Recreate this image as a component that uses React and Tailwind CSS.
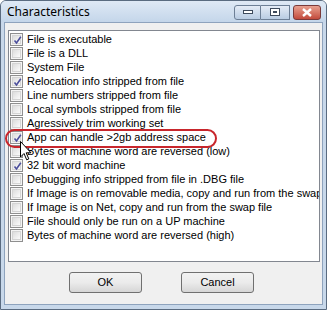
import React from "react";

const items = [
  ["File is executable", true],
  ["File is a DLL", false],
  ["System File", false],
  ["Relocation info stripped from file", true],
  ["Line numbers stripped from file", false],
  ["Local symbols stripped from file", false],
  ["Agressively trim working set", false],
  ["App can handle >2gb address space", true],
  ["Bytes of machine word are reversed (low)", false],
  ["32 bit word machine", true],
  ["Debugging info stripped from file in .DBG file", false],
  ["If Image is on removable media, copy and run from the swap file", false],
  ["If Image is on Net, copy and run from the swap file", false],
  ["File should only be run on a UP machine", false],
  ["Bytes of machine word are reversed (high)", false],
];

function Check({ checked }) {
  return (
    <div className="w-[13px] h-[13px] shrink-0 border border-[#8f8f8f] bg-[#f4f4f4] p-[1px]">
      <div className="w-full h-full border border-[#d4d4d4] bg-gradient-to-br from-[#dcdcdc] to-[#fbfbfb] relative">
        {checked && (
          <svg viewBox="0 0 9 9" className="absolute left-[0px] top-[0px] w-[9px] h-[9px]">
            <path d="M1.5 4.5 L3.5 7 L7.8 0.8" fill="none" stroke="#4c4f9c" strokeWidth="1.6" />
          </svg>
        )}
      </div>
    </div>
  );
}

export default function App() {
  return (
    <div className="w-[327px] h-[310px] bg-[#c8d8ea] border border-[#5a6b80] rounded-t-[6px] flex flex-col overflow-hidden relative" style={{ fontFamily: '"Liberation Sans", Arial, sans-serif' }}>
      <div className="h-[21px] shrink-0 flex items-center px-[6px] bg-gradient-to-b from-[#dfe9f5] to-[#c4d6ea]">
        <div className="text-[12px] text-black flex-1" style={{ fontFamily: '"Noto Sans", "Liberation Sans", sans-serif' }}>Characteristics</div>
        <div className="flex items-center mt-[1px] mr-[-1px]">
          <div className="w-[27px] h-[15px] border border-[#6d7f96] rounded-l-[3px] bg-gradient-to-b from-[#e4ecf6] to-[#b9cce3] flex items-center justify-center">
            <div className="w-[10px] h-[4px] border border-[#3d4a5c] bg-white" />
          </div>
          <div className="w-[29px] h-[15px] border border-l-0 border-[#6d7f96] bg-gradient-to-b from-[#e4ecf6] to-[#b9cce3] flex items-center justify-center">
            <div className="w-[10px] h-[8px] border border-[#3d4a5c] bg-white flex items-center justify-center">
              <div className="w-[4px] h-[2px] border border-[#3d4a5c]" />
            </div>
          </div>
          <div className="w-[28px] h-[15px] ml-[3px] border border-[#7a3a3a] rounded-[3px] bg-gradient-to-b from-[#e8a090] to-[#c24a3c] flex items-center justify-center">
            <svg viewBox="0 0 12 9" className="w-[12px] h-[9px]">
              <path d="M2 1 L10 8 M10 1 L2 8" stroke="#ffffff" strokeWidth="2.4" />
            </svg>
          </div>
        </div>
      </div>
      <div className="flex-1 mx-[3px] mb-[4px] border border-[#8ea3bd] bg-[#f0f0f0] flex flex-col">
        <div className="mt-[7px] ml-[3px] mr-[2px] h-[232px] border border-[#828790] bg-white overflow-hidden pt-[1px]">
          {items.map(([label, c]) => (
            <div key={label} className="h-[14px] flex items-center pl-[1px] whitespace-nowrap">
              <Check checked={c} />
              <span className="ml-[4px] text-[11px] text-black leading-[14px]">{label}</span>
            </div>
          ))}
        </div>
        <div className="flex justify-center gap-[39px] mt-[10px] ml-[-4px]">
          <button className="w-[73px] h-[21px] border border-[#707070] rounded-[3px] bg-gradient-to-b from-[#f2f2f2] via-[#ebebeb] to-[#d6d6d6] text-[11px] text-black">OK</button>
          <button className="w-[73px] h-[21px] border border-[#707070] rounded-[3px] bg-gradient-to-b from-[#f2f2f2] via-[#ebebeb] to-[#d6d6d6] text-[11px] text-black">Cancel</button>
        </div>
      </div>
      <div className="absolute left-[4px] top-[128px] w-[212px] h-[19px] border-2 border-[#c8262c] rounded-[10px] pointer-events-none" />
      <svg className="absolute left-[19px] top-[140px]" width="13" height="20" viewBox="0 0 13 20">
        <path d="M0.5 0.5 L0.5 16 L4 12.5 L6.7 18.8 L8.8 17.9 L6.2 11.8 L11 11.8 Z" fill="#ffffff" stroke="#000000" strokeWidth="1" />
      </svg>
    </div>
  );
}
